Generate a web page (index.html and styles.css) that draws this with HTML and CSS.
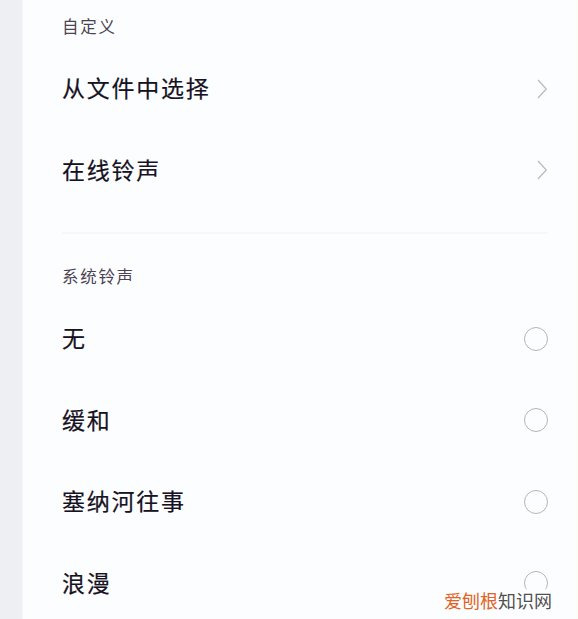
FILE: index.html
```html
<!DOCTYPE html>
<html lang="zh-CN">
<head>
<meta charset="utf-8">
<title>铃声</title>
<link rel="stylesheet" href="styles.css">
</head>
<body>
<main class="panel">
  <section class="group">
    <h2 class="heading">自定义</h2>
    <div class="row"><span>从文件中选择</span><svg class="chevron" viewBox="0 0 11 20"><path d="M1 1 L9.3 10 L1 19"/></svg></div>
    <div class="row"><span>在线铃声</span><svg class="chevron" viewBox="0 0 11 20"><path d="M1 1 L9.3 10 L1 19"/></svg></div>
  </section>
  <section class="group system">
    <h2 class="heading">系统铃声</h2>
    <div class="row"><span>无</span><i class="radio"></i></div>
    <div class="row"><span>缓和</span><i class="radio"></i></div>
    <div class="row"><span>塞纳河往事</span><i class="radio"></i></div>
    <div class="row"><span>浪漫</span><i class="radio"></i></div>
  </section>
</main>
<div class="watermark"><span class="brand">爱刨根</span>知识网</div>
</body>
</html>
```
FILE: styles.css
```css
* { box-sizing: border-box; }
body {
  margin: 0;
  height: 619px;
  overflow: hidden;
  position: relative;
  background: #eeeff3;
  font-family: "Noto Sans CJK SC", sans-serif;
}
.panel {
  height: 619px;
  margin-left: 22px;
  padding: 0 28px 0 39px;
  overflow: hidden;
  background: #fcfdfe;
  border-left: 1px solid #f5f5f8;
  border-right: 2px solid #fcfdf7;
}
.heading {
  height: 44px;
  margin: 0;
  font-size: 16.5px;
  font-weight: 400;
  line-height: 44px;
  letter-spacing: 1.7px;
  color: #4b4353;
}
.group { padding-top: 4px; }
.row {
  height: 81.5px;
  display: flex;
  align-items: center;
  justify-content: space-between;
  font-size: 23px;
  line-height: 34px;
  letter-spacing: 1.75px;
  color: #17121f;
  -webkit-text-stroke: 0.2px #17121f;
}
.row span { padding-bottom: 3px; }
.system {
  margin-top: 21px;
  padding-top: 20px;
  border-top: 2px solid #f6f7fc;
}
.chevron {
  width: 11px;
  height: 20px;
  fill: none;
  stroke: #bcbcbf;
  stroke-width: 1.3;
}
.radio {
  width: 24px;
  height: 24px;
  border: 1px solid #b5b5bb;
  border-radius: 50%;
}
.watermark {
  position: absolute;
  left: 444px;
  top: 589px;
  width: 110px;
  height: 22px;
  font-size: 18px;
  line-height: 22px;
  white-space: nowrap;
  color: #505050;
  background: #fcfdfe;
}
.brand { color: #e06426; }
```
